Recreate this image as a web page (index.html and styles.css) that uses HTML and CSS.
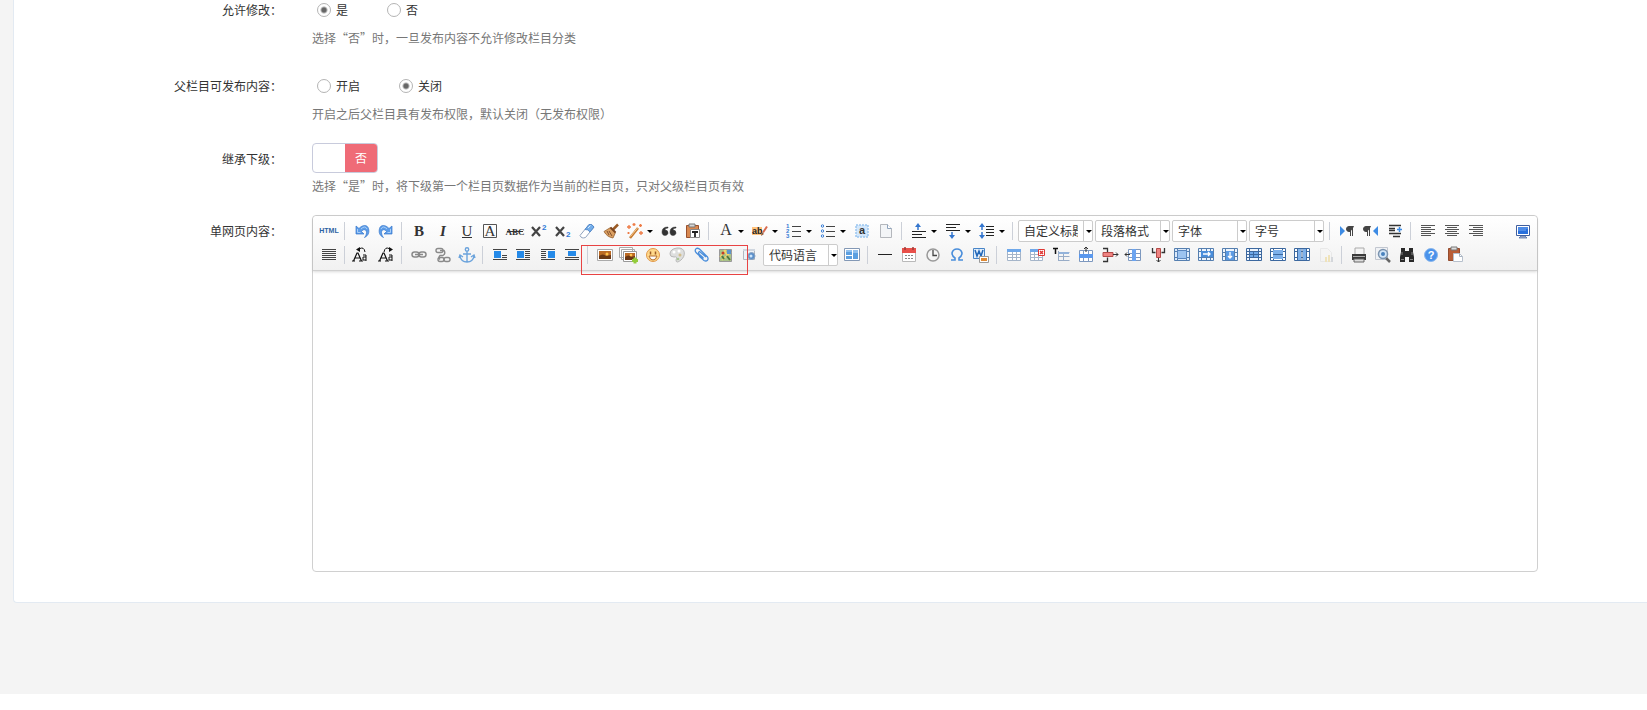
FILE: index.html
```html
<!DOCTYPE html>
<html lang="zh-CN">
<head>
<meta charset="utf-8">
<title>栏目设置</title>
<link rel="stylesheet" href="styles.css">
</head>
<body>
<main class="page">
<form class="panel">
  <div class="row" role="radiogroup" aria-labelledby="edit-label">
    <span class="label" id="edit-label">允许修改：</span>
    <div class="field">
      <div class="radios">
        <label class="radio"><input type="radio" name="edit" checked>是</label>
        <label class="radio"><input type="radio" name="edit">否</label>
      </div>
      <p class="hint">选择“否”时，一旦发布内容不允许修改栏目分类</p>
    </div>
  </div>
  <div class="row row-parent" role="radiogroup" aria-labelledby="parent-label">
    <span class="label" id="parent-label">父栏目可发布内容：</span>
    <div class="field">
      <div class="radios">
        <label class="radio"><input type="radio" name="parent">开启</label>
        <label class="radio"><input type="radio" name="parent" checked>关闭</label>
      </div>
      <p class="hint">开启之后父栏目具有发布权限，默认关闭（无发布权限）</p>
    </div>
  </div>
  <div class="row row-switch">
    <span class="label" id="inherit">继承下级：</span>
    <div class="field">
      <button type="button" class="switch" role="switch" aria-checked="false" aria-labelledby="inherit"><span class="switch-knob"></span><span class="switch-text">否</span></button>
      <p class="hint hint-switch">选择“是”时，将下级第一个栏目页数据作为当前的栏目页，只对父级栏目页有效</p>
    </div>
  </div>
  <div class="row row-editor">
    <label class="label" for="content">单网页内容：</label>
    <div class="field editor">
      <div class="toolbar">
        <div class="tools">
          <button type="button" class="tool" title="源代码"><svg viewBox="0 0 20 20"><text x="10" y="12" text-anchor="middle" font-size="7" font-weight="bold" fill="#2d62a3">HTML</text></svg></button>
          <span class="sep"></span>
          <button type="button" class="tool" title="撤销"><svg viewBox="0 0 20 20"><path d="M4 5v8h8l-2.500-2.500c2-3 5-2 5 1 0 2-1 4-2 5 4-2 5-5 4-9-1-4-6-4-9.500 0z" fill="#5c9ce8" stroke="#3577cc" stroke-width=".7"/><path d="M5.500 8v3.500h3M9 8q4-4 6-0" fill="none" stroke="#a9cff8"/></svg></button>
          <button type="button" class="tool" title="重做"><svg viewBox="0 0 20 20"><g transform="matrix(-1 0 0 1 20 0)"><path d="M4 5v8h8l-2.500-2.500c2-3 5-2 5 1 0 2-1 4-2 5 4-2 5-5 4-9-1-4-6-4-9.500 0z" fill="#5c9ce8" stroke="#3577cc" stroke-width=".7"/><path d="M5.500 8v3.500h3M9 8q4-4 6-0" fill="none" stroke="#a9cff8"/></g></svg></button>
          <span class="sep"></span>
          <button type="button" class="tool" title="加粗"><svg viewBox="0 0 20 20" class="serif"><text x="10" y="15" text-anchor="middle" font-size="15" font-weight="bold">B</text></svg></button>
          <button type="button" class="tool" title="斜体"><svg viewBox="0 0 20 20" class="serif"><text x="10" y="15" text-anchor="middle" font-size="15" font-weight="bold" font-style="italic">I</text></svg></button>
          <button type="button" class="tool" title="下划线"><svg viewBox="0 0 20 20" class="serif"><text x="10" y="15" text-anchor="middle" font-size="15">U</text><path d="M5 16.500h10" stroke="#333"/></svg></button>
          <button type="button" class="tool" title="字符边框"><svg viewBox="0 0 20 20" class="serif"><path d="M2.500 3.500h13v13h-13z" fill="none" stroke="#555"/><text x="9" y="15" text-anchor="middle" font-size="15">A</text></svg></button>
          <button type="button" class="tool" title="删除线"><svg viewBox="0 0 20 20" class="serif"><text x="10" y="14" text-anchor="middle" font-size="9" font-weight="bold">ABC</text><path d="M2 10.500h16" stroke="#333"/></svg></button>
          <button type="button" class="tool" title="上标"><svg viewBox="0 0 20 20"><path d="M3 6l8 9M11 6l-8 9" stroke="#444" stroke-width="2.200"/><text x="13" y="9" font-size="8" font-weight="bold" fill="#2f79d8">2</text></svg></button>
          <button type="button" class="tool" title="下标"><svg viewBox="0 0 20 20"><path d="M3 6l8 9M11 6l-8 9" stroke="#444" stroke-width="2.200"/><text x="13" y="16" font-size="8" font-weight="bold" fill="#2f79d8">2</text></svg></button>
          <button type="button" class="tool" title="清除格式"><svg viewBox="0 0 20 20"><path d="M3 14.500L12 3.500q3-1 5 2.500l-8.500 10.500q-4 1.500-5.500-2z" fill="#fff" stroke="#8fa2bd"/><path d="M8 8.500l4-5q3-1 5 2.500l-4 5q-2-3-5-2.500z" fill="#74aeea" stroke="#4a82c6" stroke-width=".8"/><path d="M11 7l2.500-2.500" stroke="#d5eaff"/></svg></button>
          <button type="button" class="tool" title="格式刷"><svg viewBox="0 0 20 20"><path d="M17 3.500l-5 5" stroke="#9a5a24" stroke-width="2.500"/><path d="M9.500 6.500l5 5-2.500 5.500q-6-1-9-6.500z" fill="#dba062" stroke="#94602f" stroke-width=".8"/><path d="M9.500 6.500l5 5" stroke="#7a4520" stroke-width="2"/><path d="M6 10l2 4M8 10l3 5" stroke="#83502a"/></svg></button>
          <button type="button" class="tool split" title="自动排版"><svg viewBox="0 0 20 20"><path d="M5 17l8-10" stroke="#c5792f" stroke-width="2.500"/><path d="M5.500 15.500l7-8.500" stroke="#f7c88d"/><path d="M4 4v4M2 6h4M9 2v3M7.500 3.500h3M16 10v4M14 12h4M15.500 3v3M14 4.500h3M3.500 11v2M2.500 12h2" stroke="#ee7b45" stroke-width="1.300"/></svg></button>
          <button type="button" class="tool" title="引用"><svg viewBox="0 0 20 20"><path d="M9 6q-6 0-6 5c0 5 6 4 6 1q0-3-3-3q0-2 3-2zM17 6q-6 0-6 5c0 5 6 4 6 1q0-3-3-3q0-2 3-2z" fill="#333" stroke="#333" stroke-width=".5"/></svg></button>
          <button type="button" class="tool" title="纯文本粘贴"><svg viewBox="0 0 20 20"><path d="M3.500 4.500h12v12h-12z" fill="#d88850" stroke="#98502d"/><path d="M6 3h6v3H6z" fill="#d7d7d7" stroke="#777"/><path d="M7.500 8.500h9v8h-9z" fill="#fff" stroke="#888"/><path d="M9 11h6M12 11v5" stroke="#222" stroke-width="1.800"/></svg></button>
          <span class="sep"></span>
          <button type="button" class="tool split" title="字体颜色"><svg viewBox="0 0 20 20" class="serif"><text x="10" y="14" text-anchor="middle" font-size="16">A</text></svg></button>
          <button type="button" class="tool split" title="背景色"><svg viewBox="0 0 20 20"><path d="M2 6h10v8H2z" fill="#ffc37c"/><text x="2" y="13" font-size="9" font-weight="bold" fill="#222">ab</text><path d="M17 5.500l-4 6" stroke="#d8694d" stroke-width="2"/><path d="M12 11l-1 4 3-2z" fill="#8e583b"/></svg></button>
          <button type="button" class="tool split" title="有序列表"><svg viewBox="0 0 20 20"><path d="M8 5.500h9M8 10.500h9M8 15.500h9" stroke="#444"/><text x="2" y="7" font-size="6" font-weight="bold" fill="#357bd5">1</text><text x="2" y="12" font-size="6" font-weight="bold" fill="#357bd5">2</text><text x="2" y="17" font-size="6" font-weight="bold" fill="#357bd5">3</text></svg></button>
          <button type="button" class="tool split" title="无序列表"><svg viewBox="0 0 20 20"><path d="M8 5.500h9M8 10.500h9M8 15.500h9" stroke="#444"/><g fill="#fff" stroke="#357bd5"><circle cx="4.500" cy="5" r="1.200"/><circle cx="4.500" cy="10" r="1.200"/><circle cx="4.500" cy="15" r="1.200"/></g></svg></button>
          <button type="button" class="tool" title="全选"><svg viewBox="0 0 20 20"><path d="M4 4h12v12H4z" fill="#d3e7fb" stroke="#9cc6ef" stroke-width="1.500" stroke-dasharray="2 1"/><text x="10" y="13" text-anchor="middle" font-size="11" font-weight="bold" fill="#333">a</text></svg></button>
          <button type="button" class="tool" title="清空文档"><svg viewBox="0 0 20 20"><path d="M4.500 3.500h7l4 4v9h-11z" fill="#f3f5f7" stroke="#b4b7bc"/><path d="M11.500 3.500v4h4" fill="#fff" stroke="#8fa4bd"/></svg></button>
          <span class="sep"></span>
          <button type="button" class="tool split" title="段前距"><svg viewBox="0 0 20 20"><path d="M3 10.500h14M3 13.500h10M3 16.500h14" stroke="#222"/><path d="M9 9V6" stroke="#3476ce" stroke-width="1.500"/><path d="M6 6l3-4 3 4z" fill="#3476ce"/></svg></button>
          <button type="button" class="tool split" title="段后距"><svg viewBox="0 0 20 20"><path d="M3 3.500h14M3 6.500h10M3 9.500h14" stroke="#222"/><path d="M9 11v4" stroke="#3476ce" stroke-width="1.500"/><path d="M6 14l3 4 3-4z" fill="#3476ce"/></svg></button>
          <button type="button" class="tool split" title="行间距"><svg viewBox="0 0 20 20"><path d="M9 5.500h8M9 8.500h8M9 11.500h8M9 14.500h8" stroke="#222"/><path d="M5 5v4M5 11v4" stroke="#3476ce" stroke-width="1.500"/><path d="M2 6l3-4 3 4zM2 14l3 4 3-4z" fill="#3476ce"/></svg></button>
          <span class="sep"></span>
          <span class="combo"><select aria-label="自定义标题"><option>自定义标题</option></select></span>
          <span class="combo"><select aria-label="段落格式"><option>段落格式</option></select></span>
          <span class="combo"><select aria-label="字体"><option>字体</option></select></span>
          <span class="combo"><select aria-label="字号"><option>字号</option></select></span>
          <span class="sep"></span>
          <button type="button" class="tool" title="从左向右输入"><svg viewBox="0 0 20 20"><path d="M3 5l5 5-5 5z" fill="#3d8be4"/><path d="M16.500 5.500H12a2 2 0 0 0 0 5h1zM13.500 5v10M15.500 5v10" fill="#444" stroke="#444"/></svg></button>
          <button type="button" class="tool" title="从右向左输入"><svg viewBox="0 0 20 20"><path d="M17 5l-5 5 5 5z" fill="#3d8be4"/><path d="M9.500 5.500H5a2 2 0 0 0 0 5h1zM6.500 5v10M8.500 5v10" fill="#444" stroke="#444"/></svg></button>
          <button type="button" class="tool" title="首行缩进"><svg viewBox="0 0 20 20"><path d="M4 4.500h12M4 7.500h6M4 9.500h6M4 12.500h12M8 15.500h7" stroke="#333" stroke-width="1.300"/><path d="M12 8.500h5M14.500 6v5" stroke="#3d8be4" stroke-width="1.500"/></svg></button>
          <span class="sep"></span>
          <button type="button" class="tool" title="居左对齐"><svg viewBox="0 0 20 20"><path d="M3 4.500h14M3 6.500h10M3 8.500h14M3 10.500h10M3 12.500h14M3 14.500h10" stroke="#555"/></svg></button>
          <button type="button" class="tool" title="居中对齐"><svg viewBox="0 0 20 20"><path d="M3 4.500h14M5 6.500h10M3 8.500h14M5 10.500h10M3 12.500h14M5 14.500h10" stroke="#555"/></svg></button>
          <button type="button" class="tool" title="居右对齐"><svg viewBox="0 0 20 20"><path d="M3 4.500h14M7 6.500h10M3 8.500h14M7 10.500h10M3 12.500h14M7 14.500h10" stroke="#555"/></svg></button>
          <button type="button" class="tool tool-end" title="全屏"><svg viewBox="0 0 20 20"><path d="M3.500 4.500h13v10h-13z" fill="#fff" stroke="#405f9f"/><path d="M5 6h10v7H5z" fill="#286fdc"/><path d="M5 7h10M5 9h8" stroke="#74a9f1"/><path d="M8 15h4l2 2H6z" fill="#a9b6cf" stroke="#405f9f" stroke-width=".7"/></svg></button>
        </div>
        <div class="tools">
          <button type="button" class="tool" title="两端对齐"><svg viewBox="0 0 20 20"><path d="M3 4.500h14M3 6.500h14M3 8.500h14M3 10.500h14M3 12.500h14M3 14.500h14" stroke="#444"/></svg></button>
          <span class="sep"></span>
          <button type="button" class="tool" title="字母大写"><svg viewBox="0 0 20 20"><path d="M1.500 16L5 8h1l3.500 8M3 13h5M0 16h3M7 16h4" fill="none" stroke="#111" stroke-width="1.200"/><path d="M11 10h3v6M14 12h-3v3h3" fill="none" stroke="#111"/><path d="M7 4q5-3 6 3" fill="none" stroke="#111"/><path d="M4 4.500L8 2v5z" fill="#111"/></svg></button>
          <button type="button" class="tool" title="字母小写"><svg viewBox="0 0 20 20"><path d="M3.500 16L7 8h1l3.500 8M5 13h5M2 16h3M9 16h4" fill="none" stroke="#111" stroke-width="1.200"/><path d="M13 10h3v6M16 12h-3v3h3" fill="none" stroke="#111"/><path d="M8 7q1-6 6-3" fill="none" stroke="#111"/><path d="M17 4.500L13 2v5z" fill="#111"/></svg></button>
          <span class="sep"></span>
          <button type="button" class="tool" title="超链接"><svg viewBox="0 0 20 20"><g fill="none" stroke="#8a8a8a" stroke-width="1.500"><rect x="3" y="7" width="7" height="5" rx="2.500"/><rect x="10" y="7" width="7" height="5" rx="2.500"/><path d="M6 9.500h8"/></g></svg></button>
          <button type="button" class="tool" title="取消链接"><svg viewBox="0 0 20 20"><g fill="none" stroke="#8a8a8a" stroke-width="1.400"><rect x="3" y="3.500" width="7" height="4" rx="2"/><path d="M7 5.500h4q2 3-1 5H7q-2 2 0 4"/><rect x="5" y="12.500" width="6" height="4" rx="2"/><rect x="11" y="12.500" width="6" height="4" rx="2"/></g></svg></button>
          <button type="button" class="tool" title="锚点"><svg viewBox="0 0 20 20"><g fill="none" stroke="#6ba3dc" stroke-width="1.400"><circle cx="10" cy="4.500" r="1.700"/><path d="M10 6.500v10M6 9h8M3 11q1 6 7 6t7-6M2 13l1-3 3 2M18 13l-1-3-3 2"/></g></svg></button>
          <span class="sep"></span>
          <button type="button" class="tool" title="左浮动"><svg viewBox="0 0 20 20"><path d="M3 4.500h14M12 10.500h5M12 12.500h5M3 14.500h14" stroke="#444"/><path d="M4 6h7v7H4z" fill="#258ae8"/></svg></button>
          <button type="button" class="tool" title="默认"><svg viewBox="0 0 20 20"><path d="M2 4.500h14M11 6.500h5M11 8.500h5M11 10.500h5M11 12.500h5M2 14.500h14" stroke="#444"/><path d="M3 6h7v7H3z" fill="#258ae8"/></svg></button>
          <button type="button" class="tool" title="右浮动"><svg viewBox="0 0 20 20"><path d="M3 4.500h14M3 6.500h5M3 8.500h5M3 10.500h5M3 12.500h5M3 14.500h14" stroke="#444"/><path d="M10 6h7v7h-7z" fill="#258ae8"/></svg></button>
          <button type="button" class="tool" title="居中"><svg viewBox="0 0 20 20"><path d="M3 4.500h14M3 12.500h14M3 14.500h14" stroke="#444"/><path d="M6 6h8v5H6z" fill="#258ae8"/></svg></button>
          <span class="sep"></span>
          <button type="button" class="tool" title="单图上传"><svg viewBox="0 0 20 20"><path d="M2.500 4.500h15v11h-15z" fill="#fff" stroke="#aaa"/><path d="M4 6h12v8H4z" fill="#bb6a24"/><path d="M4 11q4-3 7 0l5-1v4H4z" fill="#6a3714"/><circle cx="12" cy="9" r="1.500" fill="#ffc24b"/></svg></button>
          <button type="button" class="tool" title="多图上传"><svg viewBox="0 0 20 20"><path d="M.500 2.500h13v10h-13zM2.500 4.500h13v10h-13z" fill="#fff" stroke="#aaa"/><path d="M4.500 6.500h13v10h-13z" fill="#fff" stroke="#999"/><path d="M6 8h10v7H6z" fill="#bb6a24"/><path d="M6 12q4-3 6 0l4-1v4H6z" fill="#6a3714"/><circle cx="12" cy="10" r="1.300" fill="#ffc24b"/><path d="M16 12.500v6M13 15.500h6" stroke="#94cc3c" stroke-width="3"/></svg></button>
          <button type="button" class="tool" title="表情"><svg viewBox="0 0 20 20"><circle cx="10" cy="10" r="6.500" fill="#ffd88a" stroke="#e2994a"/><path d="M7.500 6.500v3M12.500 6.500v3" stroke="#9a5a25" stroke-width="1.500"/><path d="M6 11h8q-1 4-4 4t-4-4z" fill="#fff" stroke="#b36d2c"/></svg></button>
          <button type="button" class="tool" title="涂鸦"><svg viewBox="0 0 20 20"><path d="M3 9q0-5 7-6c9-1 9 8 4 12q-5 4-5 0 2-4-2-3-4 0-4-3z" fill="#dedfde" stroke="#b8b8b8"/><circle cx="7" cy="7" r="1.500" fill="#fff"/><circle cx="12" cy="6" r="1.500" fill="#fff"/><circle cx="13" cy="10" r="1.500" fill="#d2bd8b"/><circle cx="11" cy="14" r="1.300" fill="#a9c694"/></svg></button>
          <button type="button" class="tool" title="附件"><svg viewBox="0 0 20 20"><path d="M8 11l5 4.500c3 1.500 5-1 3.500-3.500L8.500 4C5.500 2 3 4.500 5 7.500l7.500 7M15 12L8.500 6.500q-2 1 0 3l4 3.500" fill="none" stroke="#4a8edb" stroke-width="1.300"/></svg></button>
          <button type="button" class="tool" title="地图"><svg viewBox="0 0 20 20"><path d="M4.500 4.500h12v12h-12z" fill="#a9c389" stroke="#999"/><path d="M5 12l6-7M7 15l9-8M9 5l6 10" stroke="#f3d36a" stroke-width="1.500"/><path d="M12 5h4v4h-4z" fill="#5d93cc"/><circle cx="8" cy="8" r="1.500" fill="#c43e2a"/><path d="M12 11l3 4M7 11l2 3" stroke="#4d7842" stroke-width="2"/></svg></button>
          <button type="button" class="tool" title="插入Iframe"><svg viewBox="0 0 20 20"><path d="M4.500 4.500h11v10h-11z" fill="#eef2f7" stroke="#b2b8c1"/><path d="M4 4h12v2H4z" fill="#cfd6df"/><circle cx="12.500" cy="11" r="3.500" fill="#5b8fca" stroke="#8ba2bd"/><circle cx="12" cy="11" r="1.500" fill="#cce5fb"/></svg></button>
          <span class="combo"><select aria-label="代码语言"><option>代码语言</option></select></span>
          <button type="button" class="tool" title="模板"><svg viewBox="0 0 20 20"><path d="M2.500 3.500h15v12h-15z" fill="#fff" stroke="#8398b5"/><path d="M4 5h6v5H4zM11 5h5v9h-5zM4 11h6v3H4z" fill="#5b9fe0"/><path d="M4 5h6v2H4zM11 5h5v3h-5z" fill="#8fc0ee"/></svg></button>
          <span class="sep"></span>
          <button type="button" class="tool" title="分隔线"><svg viewBox="0 0 20 20"><path d="M3 9.500h14" stroke="#222"/></svg></button>
          <button type="button" class="tool" title="日期"><svg viewBox="0 0 20 20"><path d="M3.500 4.500h13v12h-13z" fill="#fff" stroke="#b9b9b9"/><path d="M3 3h14v5H3z" fill="#e8504a"/><path d="M6 2v3M14 2v3" stroke="#9d3b37" stroke-width="1.500"/><path d="M6 10.500h9M6 13.500h9" stroke="#888" stroke-dasharray="2 1"/></svg></button>
          <button type="button" class="tool" title="时间"><svg viewBox="0 0 20 20"><circle cx="10" cy="10" r="6" fill="#f5f5f5" stroke="#999" stroke-width="1.500"/><path d="M10 5v5.500h4" fill="none" stroke="#444" stroke-width="1.300"/></svg></button>
          <button type="button" class="tool" title="特殊字符"><svg viewBox="0 0 20 20"><path d="M4 15h4v-2q-3-2-3-5 1-4 5-4t5 4q0 3-3 5v2h4" fill="none" stroke="#4a8edb" stroke-width="1.600"/></svg></button>
          <button type="button" class="tool" title="图片转存"><svg viewBox="0 0 20 20"><path d="M2.500 3.500h11v10h-11z" fill="#e3effb" stroke="#4885c8"/><path d="M4 5l2 6 2-5 2 5 2-6" fill="none" stroke="#2167b9" stroke-width="1.500"/><path d="M8.500 11.500h9v6h-9z" fill="#fff" stroke="#999"/><path d="M10 13h6v3h-6z" fill="#e08a34"/></svg></button>
          <span class="sep"></span>
          <button type="button" class="tool" title="插入表格"><svg viewBox="0 0 20 20"><path d="M3.500 4.500h13v11h-13zM3 9.500h14M3 12.500h14M8.500 7v9M12.500 7v9" fill="#fff" stroke="#a5b5c9"/><path d="M3 4h14v3H3z" fill="#6fa8ea"/></svg></button>
          <button type="button" class="tool" title="删除表格"><svg viewBox="0 0 20 20"><path d="M2.500 4.500h12v11h-12zM2 9.500h13M2 12.500h13M6.500 7v9M10.500 7v9" fill="#fff" stroke="#a5b5c9"/><path d="M2 4h13v3H2z" fill="#6fa8ea"/><path d="M10.500 4.500h6v6h-6z" fill="#fff" stroke="#df3834"/><path d="M12 6l3 3M15 6l-3 3" stroke="#df3834" stroke-width="1.500"/></svg></button>
          <button type="button" class="tool" title="表格前插入行"><svg viewBox="0 0 20 20"><path d="M1 3.500h5M3.500 3v6" stroke="#111" stroke-width="1.500"/><path d="M6.500 7.500h11M6.500 11.500h11M6.500 15.500h11M6.500 6v10M11.500 7v9" fill="none" stroke="#98acc7"/><path d="M7 7h10v2H7z" fill="#93b3db"/></svg></button>
          <button type="button" class="tool" title="前插入行"><svg viewBox="0 0 20 20"><path d="M3.500 5.500h13v11h-13zM7.500 5v11M12.500 5v11" fill="#fff" stroke="#7d98bf"/><path d="M3 9h14v4H3z" fill="#5a98ee"/><path d="M10 7V2M8 4l2-2 2 2" fill="none" stroke="#333"/></svg></button>
          <button type="button" class="tool" title="删除行"><svg viewBox="0 0 20 20"><path d="M3 3.500h4.500v4M3 16.500h4.500v-4" fill="none" stroke="#333" stroke-width="1.300"/><path d="M3 7.500h10v4H3z" fill="#ee8381" stroke="#b54a48"/><path d="M13 9.500h5M16 7.500l2 2-2 2" fill="none" stroke="#333"/></svg></button>
          <button type="button" class="tool" title="前插入列"><svg viewBox="0 0 20 20"><path d="M4.500 4.500h12v11h-12zM4 8.500h13M4 12.500h13" fill="#fff" stroke="#7d98bf"/><path d="M8 4h4v12H8z" fill="#6ba4f0"/><path d="M6 9.500H1M3 7.500l-2 2 2 2" fill="none" stroke="#333"/></svg></button>
          <button type="button" class="tool" title="删除列"><svg viewBox="0 0 20 20"><path d="M4.500 3v4.500h3M16.500 3v4.500h-3" fill="none" stroke="#333" stroke-width="1.300"/><path d="M8.500 3.500h4v9h-4z" fill="#ee8381" stroke="#b54a48"/><path d="M10.500 13v4M8.500 15l2 2 2-2" fill="none" stroke="#333"/></svg></button>
          <button type="button" class="tool" title="合并多个单元格"><svg viewBox="0 0 20 20"><path d="M2.500 3.500h15v12h-15zM2 6.500h16M2 12.500h16M5.500 3v12M14.500 3v12" fill="#dceafa" stroke="#557fb0"/><path d="M5.500 5.500h9v8h-9z" fill="#9dc4f0" stroke="#5a87c0"/></svg></button>
          <button type="button" class="tool" title="右合并单元格"><svg viewBox="0 0 20 20"><path d="M2.500 3.500h15v12h-15zM2 6.500h16M2 12.500h16M5.500 3v12M10.500 3v12M14.500 3v12" fill="#eef5fd" stroke="#557fb0"/><path d="M5 6h12v6H5z" fill="#4a8edb"/><path d="M7 9h7M12 7l2 2-2 2" fill="none" stroke="#fff" stroke-width="1.300"/></svg></button>
          <button type="button" class="tool" title="下合并单元格"><svg viewBox="0 0 20 20"><path d="M2.500 3.500h15v12h-15zM2 7.500h16M2 11.500h16M5.500 3v12M14.500 3v12" fill="#eef5fd" stroke="#557fb0"/><path d="M6 6h8v9H6z" fill="#5c9be4"/><path d="M10 7v6M8 11l2 2 2-2" fill="none" stroke="#fff" stroke-width="1.300"/></svg></button>
          <button type="button" class="tool" title="拆分成单元格"><svg viewBox="0 0 20 20"><path d="M2.500 3.500h15v12h-15z" fill="#eef5fd" stroke="#3c689f"/><path d="M5 6h10v7H5z" fill="#6fa8e8"/><path d="M2 6.500h16M2 9.500h16M2 12.500h16M5.500 3v12M9.500 6v7M14.500 3v12" stroke="#3c689f"/></svg></button>
          <button type="button" class="tool" title="拆分成行"><svg viewBox="0 0 20 20"><path d="M2.500 3.500h15v12h-15zM2 6.500h16M2 12.500h16M5.500 3v12M14.500 3v12" fill="#fff" stroke="#3c689f"/><path d="M5 5h10v4H5zM5 10h10v4H5z" fill="#7db0ea"/><path d="M5 9.500h10" stroke="#3c689f"/></svg></button>
          <button type="button" class="tool" title="拆分成列"><svg viewBox="0 0 20 20"><path d="M2.500 3.500h15v12h-15zM2 6.500h16M2 12.500h16M5.500 3v12M14.500 3v12" fill="#fff" stroke="#3c689f"/><path d="M6 4h3v11H6zM11 4h3v11h-3z" fill="#7db0ea"/><path d="M10 4v11" stroke="#3c689f"/></svg></button>
          <button type="button" class="tool" title="图表" disabled><svg viewBox="0 0 20 20"><path d="M4.500 3.500h7l4 4v9h-11z" fill="#f5f5f5" stroke="#ccc"/><path d="M9 12h2v5H9zM12 10h2v7h-2z" fill="#e5be3c"/><path d="M15 12h2v5h-2z" fill="#8c97a4"/></svg></button>
          <span class="sep"></span>
          <button type="button" class="tool" title="打印"><svg viewBox="0 0 20 20"><path d="M6 3h9v7H6z" fill="#f4f4f4" stroke="#aaa"/><path d="M3 9h14v6H3z" fill="#3a3a3a"/><path d="M4 11.500h12" stroke="#aaa"/><path d="M5 14h10v3H5z" fill="#ddd" stroke="#666"/></svg></button>
          <button type="button" class="tool" title="预览"><svg viewBox="0 0 20 20"><path d="M2.500 2.500h12v12h-12z" fill="#f0f2f5" stroke="#c2c7d0"/><path d="M13 13l4 4" stroke="#666" stroke-width="2.500"/><circle cx="10" cy="9" r="4.500" fill="#d3e6f8" stroke="#7b93ae" stroke-width="1.500"/><circle cx="10" cy="9" r="2" fill="#4a82bd"/></svg></button>
          <button type="button" class="tool" title="查询替换"><svg viewBox="0 0 20 20"><path d="M4 3h4v3h4V3h4v4l1 5v5h-5v-5H8v5H3v-5l1-5z" fill="#292929"/><path d="M5 7v3M15 7v3M4 14.500h3M13 14.500h3" stroke="#858585"/></svg></button>
          <button type="button" class="tool" title="帮助"><svg viewBox="0 0 20 20"><circle cx="10" cy="10" r="6.500" fill="#4a92ea" stroke="#8ab7ed"/><text x="10" y="14" text-anchor="middle" font-size="11" font-weight="bold" fill="#fff">?</text></svg></button>
          <button type="button" class="tool" title="从草稿箱加载"><svg viewBox="0 0 20 20"><path d="M3.500 3.500h11v12h-11z" fill="#b95e37" stroke="#934c2f"/><path d="M6 2h6v3H6z" fill="#ddd" stroke="#777"/><path d="M8.500 8.500h6l3 3v5h-9z" fill="#fff" stroke="#b7c0cc"/><path d="M14.500 8.500v3h3" fill="none" stroke="#a9b4c2"/></svg></button>
        </div>
        <span class="marker"></span>
      </div>
      <textarea class="content" id="content"></textarea>
    </div>
  </div>
</form>
</main>
</body>
</html>
```

FILE: styles.css
```css
* { box-sizing: border-box; }

body {
  margin: 0;
  background: #fff;
  color: #333;
  font: 12px/20px "Noto Sans CJK SC", sans-serif;
}

button, select, textarea { font: inherit; color: inherit; }

.page {
  padding: 0 0 91px 13px;
  background: #f4f4f4;
}

.panel {
  padding-bottom: 30px;
  background: #fff;
  border: solid #e3eaf2;
  border-width: 0 0 1px 1px;
  border-radius: 0 0 0 4px;
}

.row {
  display: flex;
  gap: 30px;
  padding-right: 109px;
}

.row-parent { margin-top: 28px; }
.row-switch, .row-editor { margin-top: 19px; }

.label {
  flex: none;
  width: 268px;
  text-align: right;
}

.row-switch .label, .row-editor .label { padding-top: 6px; }

.field { flex: 1; min-width: 0; }

.radios { display: flex; gap: 39px; padding-left: 5px; }

.radio { display: flex; align-items: center; gap: 5px; }

.radio input {
  appearance: none;
  width: 14px;
  height: 14px;
  margin: 0;
  border: 1px solid #b4b4b4;
  border-radius: 50%;
  background: #fff;
}

.radio input:checked { background: radial-gradient(circle, #666 0 2px, #fff 4px); }

.hint { margin: 8px 0 0; color: #777; }
.hint-switch { margin-top: 3px; }

.switch {
  display: flex;
  width: 66px;
  height: 30px;
  padding: 0;
  overflow: hidden;
  background: #fff;
  border: 1px solid #c8cbdc;
  border-radius: 4px;
}

.switch-knob { flex: 1; }

.switch-text {
  flex: 1;
  background: #ef6b77;
  color: #fff;
  line-height: 28px;
  text-align: center;
}

.editor {
  border: 1px solid #d0d0d0;
  border-radius: 4px;
}

.toolbar {
  position: relative;
  padding: 3px 2px 3px 4px;
  background: linear-gradient(#fff, #f1f1f1);
  border-bottom: 1px solid #d0d0d0;
  border-radius: 4px 4px 0 0;
  box-shadow: 0 1px 3px rgba(0, 0, 0, .15);
}

.tools { display: flex; align-items: center; height: 24px; }

.tool {
  display: flex;
  flex: none;
  align-items: center;
  justify-content: center;
  width: 24px;
  height: 24px;
  padding: 0;
  background: none;
  border: 0;
}

.tool:disabled { opacity: .3; }

.tool svg {
  flex: none;
  width: 20px;
  height: 20px;
  fill: #333;
  font-family: "Liberation Sans", sans-serif;
}

.tool .serif { font-family: "Liberation Serif", serif; }

.split { justify-content: flex-start; gap: 2px; width: 34px; padding-left: 2px; }

.split::after {
  content: "";
  border: solid transparent;
  border-width: 3px 3px 0;
  border-top-color: #000;
}

.tool-end { margin-left: auto; }

.sep {
  flex: none;
  width: 1px;
  height: 18px;
  margin: 0 5px 0 3px;
  background: #ccd0d8;
}

.combo {
  position: relative;
  display: flex;
  flex: none;
  width: 75px;
  height: 22px;
  margin-right: 2px;
}

.tool + .combo { margin-left: 2px; }

.combo select {
  appearance: none;
  width: 100%;
  margin: 0;
  padding: 0 14px 0 5px;
  background: #fff;
  border: 1px solid #ccc;
  border-radius: 2px;
  line-height: 20px;
}

.combo::before {
  content: "";
  position: absolute;
  inset: 1px 9px 1px auto;
  border-left: 1px solid #ccc;
  pointer-events: none;
}

.combo::after {
  content: "";
  position: absolute;
  top: 10px;
  right: 1px;
  border: solid transparent;
  border-width: 3px 3px 0;
  border-top-color: #000;
  pointer-events: none;
}

/* Highlights the upload group; overlaps the toolbar's lower edge. */
.marker {
  position: absolute;
  top: 29px;
  left: 268px;
  width: 167px;
  height: 30px;
  border: 1px solid #e84343;
  pointer-events: none;
}

.content {
  display: block;
  width: 100%;
  height: 300px;
  padding: 8px;
  background: none;
  border: 0;
  outline: 0;
  resize: none;
}
```
